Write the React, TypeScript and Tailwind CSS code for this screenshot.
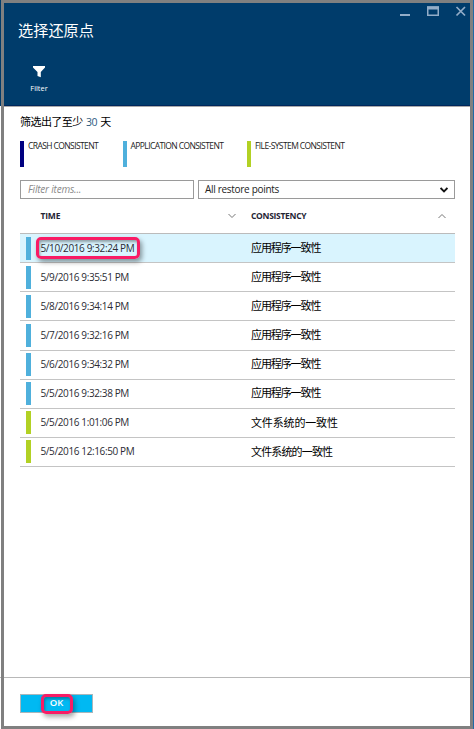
import React from "react";

type Kind = "app" | "file";

const rows: { time: string; kind: Kind; label: string; spacing?: string }[] = [
  { time: "5/10/2016 9:32:24 PM", kind: "app", label: "应用程序一致性" },
  { time: "5/9/2016 9:35:51 PM", kind: "app", label: "应用程序一致性" },
  { time: "5/8/2016 9:34:14 PM", kind: "app", label: "应用程序一致性" },
  { time: "5/7/2016 9:32:16 PM", kind: "app", label: "应用程序一致性" },
  { time: "5/6/2016 9:34:32 PM", kind: "app", label: "应用程序一致性" },
  { time: "5/5/2016 9:32:38 PM", kind: "app", label: "应用程序一致性" },
  { time: "5/5/2016 1:01:06 PM", kind: "file", label: "文件系统的一致性", spacing: "tracking-[-0.15px]" },
  { time: "5/5/2016 12:16:50 PM", kind: "file", label: "文件系统的一致性", spacing: "tracking-[-0.85px]" },
];

function Legend({ color, text, width }: { color: string; text: string; width: string }) {
  return (
    <div className={`flex h-[26px] ${width}`}>
      <div className={`w-1 ${color}`} />
      <span className="ml-1 whitespace-nowrap text-[8.5px] leading-[9px] tracking-[-0.6px] text-[#222]">{text}</span>
    </div>
  );
}

function Header() {
  return (
    <header className="h-[103px] border-b border-[#00265c] bg-[#003c6b] text-white">
      <div className="flex h-[48px] justify-between">
        <h1 className="ml-[14px] mt-[17px] text-[15.2px] leading-[20px]">选择还原点</h1>
        <svg width="70" height="16" viewBox="0 0 70 16" fill="none" stroke="#93adc8">
          <path d="M0 12H10" strokeWidth="2" />
          <path d="M27.75 4H38.25V12.25H27.75Z" strokeWidth="1.5" />
          <path d="M27 5H39" strokeWidth="3" />
          <path d="M56.5 4L65 12.5M65 4L56.5 12.5" strokeWidth="1.7" />
        </svg>
      </div>
      <div className="ml-[20px] mt-[15px] flex w-[30px] flex-col items-center">
        <svg width="12" height="12" viewBox="0 0 12 12" fill="white">
          <path d="M0 0H12V1.5L7.8 6V11.2L4.5 10V6L0 1.5Z" />
        </svg>
        <span className="mt-[5px] text-[7.4px] leading-[10px]">Filter</span>
      </div>
    </header>
  );
}

export default function App() {
  return (
    <div className="flex h-[729px] w-[474px] bg-white font-['Open_Sans','Noto_Sans_CJK_SC',sans-serif] text-[#333]">
      <div className="w-px">
        <div className="h-[106px] bg-[#003c6b]" />
        <div className="mt-[571px] h-px bg-[#b5b5b5]" />
      </div>
      <div className="flex w-[472px] flex-col border-y-[3px] border-l-[3px] border-r-[3px] border-[#808080]">
        <Header />
        <div className="h-px bg-[#aaa]" />
        <main className="ml-[16px] w-[434.5px]">
          <p className="mt-[8px] h-[26px] text-[11px] leading-[14px] tracking-[-0.55px] text-black">
            筛选出了至少 <span className="mx-px text-[10.5px] text-[#2d5a80]">30</span> 天
          </p>
          <div className="flex">
            <Legend color="bg-[#000080]" text="CRASH CONSISTENT" width="w-[102.5px]" />
            <Legend color="bg-[#4fb0dc]" text="APPLICATION CONSISTENT" width="w-[124.5px]" />
            <Legend color="bg-[#b2d124]" text="FILE-SYSTEM CONSISTENT" width="w-[110px]" />
          </div>
          <div className="mt-[13px] flex h-[19px] gap-1 text-[10px]">
            <div className="flex w-[174px] items-center border border-[#9a9a9a] pl-[7px] italic tracking-[-0.2px] text-[#8a8a8a]">Filter items...</div>
            <div className="flex w-[256.5px] items-center justify-between border border-[#9a9a9a] pl-[6px] pr-[6px]">
              <span className="tracking-[-0.3px] text-[#222]">All restore points</span>
              <svg width="8" height="6" viewBox="0 0 8 6" fill="none" stroke="#111" strokeWidth="1.8">
                <path d="M.6 1L4 4.4L7.4 1" />
              </svg>
            </div>
          </div>
          <div className="flex h-[35px] items-center border-b border-[#bbb] pl-[20.5px] text-[8.5px] font-bold text-[#252535]">
            <span className="w-[187px] pt-px tracking-[-0.2px]">TIME</span>
            <svg width="8" height="6" viewBox="0 0 8 6" fill="none" stroke="#777">
              <path d="M.5 1L4 4.5L7.5 1" />
            </svg>
            <span className="ml-[15.5px] w-[187px] pt-px tracking-[-0.3px]">CONSISTENCY</span>
            <svg width="8" height="6" viewBox="0 0 8 6" fill="none" stroke="#777">
              <path d="M.5 5L4 1.5L7.5 5" />
            </svg>
          </div>
          {rows.map((row, i) => (
            <div
              key={row.time}
              className={`flex h-[29.125px] items-center border-b border-[#c4c4c4] pl-[6px] ${i === 0 ? "bg-[#d9f4fe]" : ""}`}
            >
              <div className={`h-[23px] w-[5px] ${row.kind === "app" ? "bg-[#4fb0dc]" : "bg-[#b2d124]"}`} />
              <div className="relative ml-[9.5px] w-[210.5px] text-[10px] tracking-[-0.38px] text-[#2b2b33]">
                {row.time}
                {i === 0 && (
                  <span className="absolute left-[-4.5px] top-[-4px] h-[22px] w-[104px] rounded-[5px] border-[3px] border-[#f81c65] shadow-[2px_3px_5px_rgba(0,0,0,0.4),inset_1px_2px_3px_rgba(0,0,0,0.35)]" />
                )}
              </div>
              <span className={`whitespace-nowrap text-[11px] text-black ${row.spacing ?? "tracking-[-1.1px]"}`}>{row.label}</span>
            </div>
          ))}
        </main>
        <footer className="mt-auto h-[49px] border-t border-[#b8b8b8] pl-[16px] pt-[16px]">
          <button className="relative flex h-[19px] w-[73px] items-center justify-center border border-[#a9b6bb] bg-[#00b9f2] text-[9.5px] font-semibold text-white">
            OK
            <span className="absolute left-[20px] top-[-1px] h-[20px] w-[32px] rounded-[5px] border-[3px] border-[#f81c65] shadow-[2px_3px_5px_rgba(0,0,0,0.35),inset_1px_2px_3px_rgba(0,0,0,0.3)]" />
          </button>
        </footer>
      </div>
      <div className="w-px bg-[#1f69a5]" />
    </div>
  );
}
